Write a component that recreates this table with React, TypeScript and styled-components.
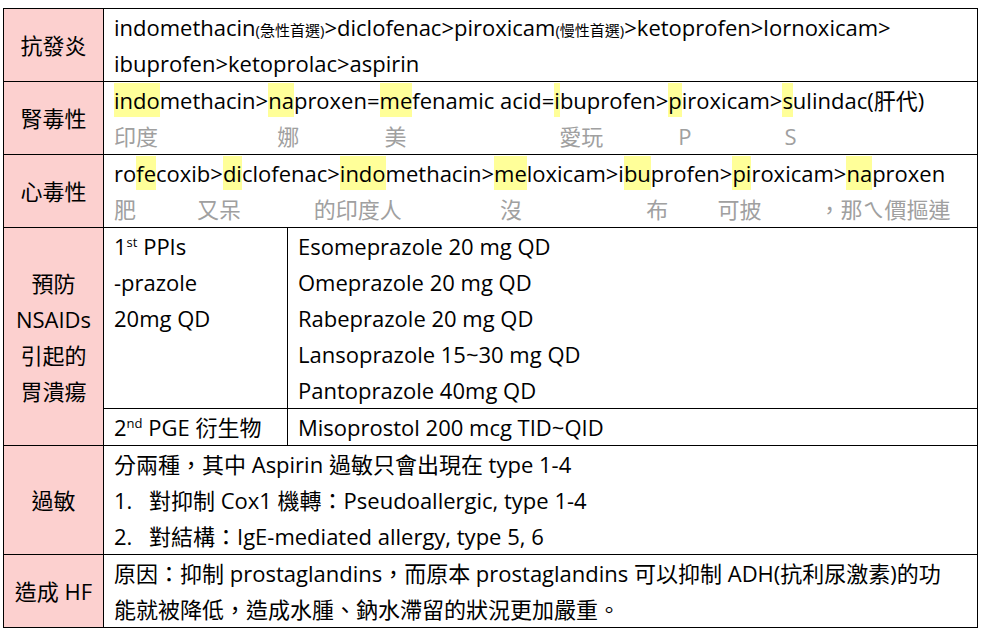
import React from "react";
import styled, { createGlobalStyle } from "styled-components";

const GlobalStyle = createGlobalStyle`
  body {
    margin: 8px 0 0 3px;
    background: #fff;
    color: #000;
    font-family: "Open Sans", "Noto Sans CJK TC", sans-serif;
  }
`;

const Table = styled.div`
  width: 975px;
  box-sizing: border-box;
  display: grid;
  grid-template-columns: 100px 874px;
  border-top: 1px solid #000;
  border-left: 1px solid #000;
  font-size: 22px;
  line-height: 36px;
`;

const Label = styled.div`
  background: #fcd0cf;
  border-right: 1px solid #000;
  border-bottom: 1px solid #000;
  display: flex;
  flex-direction: column;
  align-items: center;
  justify-content: center;
  text-align: center;
  white-space: nowrap;
`;

const Cell = styled.div<{ $flush?: boolean }>`
  border-right: 1px solid #000;
  border-bottom: 1px solid #000;
  padding: ${(p) => (p.$flush ? "0" : "0 10px")};
  white-space: nowrap;
  min-width: 0;
`;

const TextLine = styled.div`
  height: 36px;
`;

const Line = styled.div`
  display: flex;
`;

const Seg = styled.span`
  display: flex;
  flex-direction: column;
`;

const Word = styled.span`
  white-space: pre;
`;

const Hl = styled.span`
  background: #ffff99;
  display: inline-block;
  line-height: 34px;
`;

const Gloss = styled.span<{ $shift: number }>`
  width: 0;
  margin-left: ${(p) => p.$shift}px;
  color: #a0a0a0;
  white-space: nowrap;
`;

const Small = styled.span`
  font-size: 15px;
  line-height: 1;
`;

const Sup = styled.sup`
  font-size: 13px;
  line-height: 0;
  vertical-align: 8px;
`;

const SubGrid = styled.div`
  display: grid;
  grid-template-columns: 184px 1fr;
`;

const SubCell = styled.div<{ $right?: boolean; $bottom?: boolean }>`
  padding: 0 10px;
  border-right: ${(p) => (p.$right ? "1px solid #000" : "none")};
  border-bottom: ${(p) => (p.$bottom ? "1px solid #000" : "none")};
`;

const Item = styled.div`
  display: flex;
`;

const Num = styled.span`
  width: 35px;
`;

type Part = { pre?: string; hl: string; post: string; gloss: string; shift: number };

const renalParts: Part[] = [
  { hl: "indo", post: "methacin>", gloss: "印度", shift: 0 },
  { hl: "na", post: "proxen=", gloss: "娜", shift: 9 },
  { hl: "me", post: "fenamic acid=", gloss: "美", shift: 5 },
  { hl: "i", post: "buprofen>", gloss: "愛玩", shift: 5 },
  { hl: "p", post: "iroxicam>", gloss: "P", shift: 10 },
  { hl: "s", post: "ulindac(肝代)", gloss: "S", shift: 2 },
];

const cardioParts: Part[] = [
  { pre: "ro", hl: "fe", post: "coxib>", gloss: "肥", shift: 0 },
  { hl: "di", post: "clofenac>", gloss: "又呆", shift: -26 },
  { hl: "indo", post: "methacin>", gloss: "的印度人", shift: -26 },
  { hl: "me", post: "loxicam>", gloss: "沒", shift: 6 },
  { pre: "i", hl: "bu", post: "profen>", gloss: "布", shift: 28 },
  { hl: "pi", post: "roxicam>", gloss: "可披", shift: -15 },
  { hl: "na", post: "proxen", gloss: "，那ㄟ價摳連", shift: -28 },
];

const Mnemonic = ({ parts }: { parts: Part[] }) => (
  <Line>
    {parts.map((p, i) => (
      <Seg key={i}>
        <Word>
          {p.pre}
          <Hl>{p.hl}</Hl>
          {p.post}
        </Word>
        <Gloss $shift={p.shift}>{p.gloss}</Gloss>
      </Seg>
    ))}
  </Line>
);

const ppis = [
  "Esomeprazole 20 mg QD",
  "Omeprazole 20 mg QD",
  "Rabeprazole 20 mg QD",
  "Lansoprazole 15~30 mg QD",
  "Pantoprazole 40mg QD",
];

const App = () => (
  <>
    <GlobalStyle />
    <Table>
      <Label>抗發炎</Label>
      <Cell>
        <TextLine>
          indomethacin<Small>(急性首選)</Small>&gt;diclofenac&gt;piroxicam<Small>(慢性首選)</Small>
          &gt;ketoprofen&gt;lornoxicam&gt;
        </TextLine>
        <TextLine>ibuprofen&gt;ketoprolac&gt;aspirin</TextLine>
      </Cell>

      <Label>腎毒性</Label>
      <Cell>
        <Mnemonic parts={renalParts} />
      </Cell>

      <Label>心毒性</Label>
      <Cell>
        <Mnemonic parts={cardioParts} />
      </Cell>

      <Label>
        <div>預防</div>
        <div>NSAIDs</div>
        <div>引起的</div>
        <div>胃潰瘍</div>
      </Label>
      <Cell $flush>
        <SubGrid>
          <SubCell $right $bottom>
            <TextLine>
              1<Sup>st</Sup> PPIs
            </TextLine>
            <TextLine>-prazole</TextLine>
            <TextLine>20mg QD</TextLine>
          </SubCell>
          <SubCell $bottom>
            {ppis.map((d) => (
              <TextLine key={d}>{d}</TextLine>
            ))}
          </SubCell>
          <SubCell $right>
            <TextLine>
              2<Sup>nd</Sup> PGE 衍生物
            </TextLine>
          </SubCell>
          <SubCell>
            <TextLine>Misoprostol 200 mcg TID~QID</TextLine>
          </SubCell>
        </SubGrid>
      </Cell>

      <Label>過敏</Label>
      <Cell>
        <TextLine>分兩種，其中 Aspirin 過敏只會出現在 type 1-4</TextLine>
        <Item>
          <Num>1.</Num>
          <span>對抑制 Cox1 機轉：Pseudoallergic, type 1-4</span>
        </Item>
        <Item>
          <Num>2.</Num>
          <span>對結構：IgE-mediated allergy, type 5, 6</span>
        </Item>
      </Cell>

      <Label>造成 HF</Label>
      <Cell>
        <TextLine>原因：抑制 prostaglandins，而原本 prostaglandins 可以抑制 ADH(抗利尿激素)的功</TextLine>
        <TextLine>能就被降低，造成水腫、鈉水滯留的狀況更加嚴重。</TextLine>
      </Cell>
    </Table>
  </>
);

export default App;
